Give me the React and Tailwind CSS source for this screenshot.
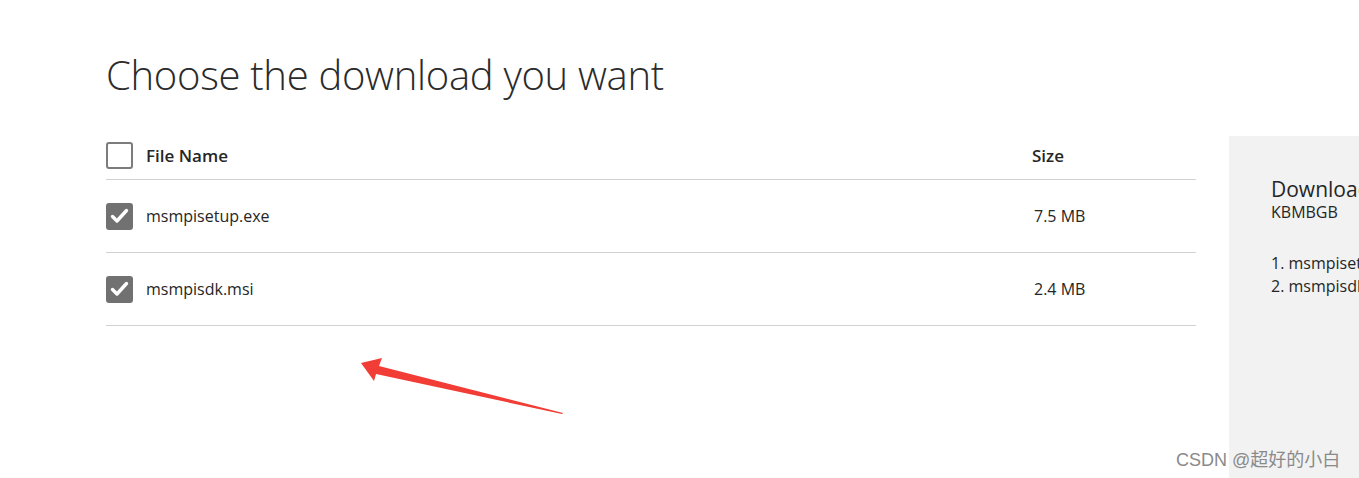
import React from 'react';

const files = [
  { name: 'msmpisetup.exe', size: '7.5 MB' },
  { name: 'msmpisdk.msi', size: '2.4 MB' },
];

const Box = ({ checked }) =>
  checked ? (
    <span className="flex h-[27px] w-[27px] shrink-0 items-center justify-center rounded-[3px] bg-[#717171]">
      <svg width="19" height="16" viewBox="0 0 19 16">
        <path d="M2.5 8.5 L7 13 L16.5 2.5" fill="none" stroke="#fff" strokeWidth="3.4" strokeLinecap="round" strokeLinejoin="round" />
      </svg>
    </span>
  ) : (
    <span className="h-[27px] w-[27px] shrink-0 rounded-[3px] border-2 border-[#7c7c7c] bg-white" />
  );

export default function App() {
  return (
    <div className="relative h-[478px] w-[1359px] overflow-hidden bg-white text-[#262626] [font-family:'Open_Sans','Noto_Sans',sans-serif]">
      <h1 className="pl-[106px] pt-[49px] text-[40px] font-light leading-[52px] tracking-[-0.3px] text-[#2b2b2b]">
        Choose the download you want
      </h1>

      <div className="mt-[35px] flex">
        {/* table */}
        <div className="ml-[106px] w-[1090px] shrink-0">
          <div className="flex h-[44px] items-center border-b border-[#d2d2d2] pb-[4px]">
            <div className="flex flex-1 items-center gap-[13px]">
              <Box checked={false} />
              <span className="text-[17px] font-semibold">File Name</span>
            </div>
            <span className="w-[164px] text-[17px] font-semibold">Size</span>
          </div>
          {files.map((f) => (
            <div key={f.name} className="flex h-[73px] items-center border-b border-[#d2d2d2]">
              <div className="flex flex-1 items-center gap-[13px]">
                <Box checked />
                <span className="text-[16px]">{f.name}</span>
              </div>
              <span className="w-[162px] text-[16px]">{f.size}</span>
            </div>
          ))}
        </div>

        {/* summary panel */}
        <div className="ml-[33px] h-[342px] w-[300px] shrink-0 whitespace-nowrap bg-[#f2f2f2] pl-[42px] pt-[40px]">
          <div className="text-[21px] leading-[26px]">Download Summary:</div>
          <div className="text-[16px] leading-[20px]">KBMBGB</div>
          <ol className="mt-[30px] text-[16px] leading-[23px]">
            <li>1. msmpisetup.exe</li>
            <li>2. msmpisdk.msi</li>
          </ol>
        </div>
      </div>

      {/* annotation arrow */}
      <svg className="absolute left-[355px] top-[352px]" width="215" height="68" viewBox="0 0 215 68">
        <path d="M6 11 L27 6 L24 14 L208 61 L207 62 L21 22 L19 29 Z" fill="#f23c36" />
      </svg>

      <div className="absolute left-[1176px] top-[447px] text-[18px] text-[#8a8a8a] [font-family:'Liberation_Sans','Noto_Sans_CJK_SC',sans-serif]">
        CSDN @超好的小白
      </div>
    </div>
  );
}
